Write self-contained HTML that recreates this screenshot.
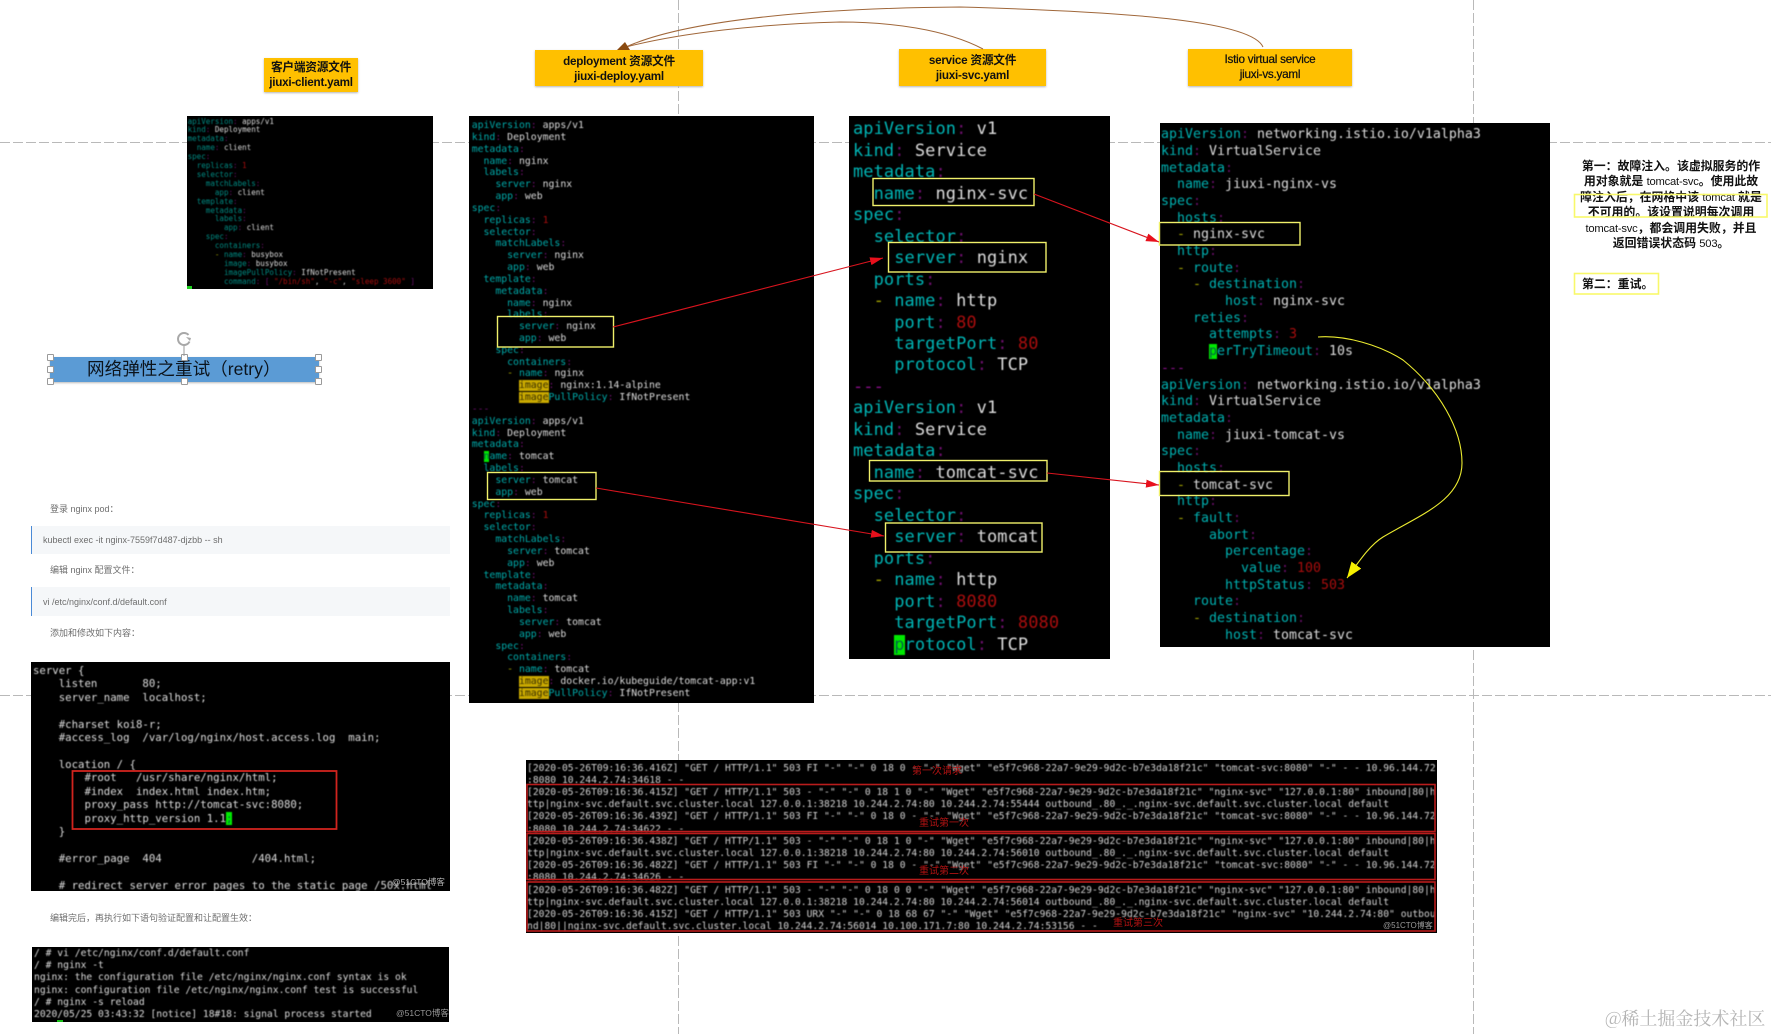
<!DOCTYPE html>
<html lang="zh"><head><meta charset="utf-8"><title>网络弹性之重试</title>
<style>
html,body{margin:0;padding:0;background:#fff;width:1771px;height:1034px;overflow:hidden}
body{position:relative;font-family:"Liberation Sans","Noto Sans CJK SC",sans-serif}
.a{position:absolute}
.blk{position:absolute;background:#000}
pre{position:absolute;margin:0;font-family:"DejaVu Sans Mono",monospace;color:#dcdcdc;white-space:pre;filter:blur(.45px)}
pre i{font-style:normal;color:#00a9a9}
pre b{font-weight:normal;color:#6c0f6c}
pre u{text-decoration:none;color:#a80d0d}
pre s{text-decoration:none;color:#a3a300}
pre em{font-style:normal;background:#c9a900;color:#3a3000}
pre mark{background:#00e800;color:#064}
.lb{position:absolute;background:#ffc000;box-shadow:0 1px 2px #b5b5b5;text-align:center;color:#111;font-size:11.7px;line-height:15px;font-weight:700;letter-spacing:-.25px;filter:blur(.2px)}
.t{position:absolute;font-size:9px;color:#6e6e6e;white-space:nowrap;line-height:12px;filter:blur(.25px)}
.cb{position:absolute;left:31px;width:418px;height:28.5px;background:#f5f7f9;border-left:1.5px solid #4a8ad6}
.h{position:absolute;width:5px;height:5px;background:#fff;border:1px solid #9a9a9a;border-radius:1px}
.rl{position:absolute;color:#b01212;font-size:10px;line-height:12px;white-space:nowrap;filter:blur(.3px)}
.wm{position:absolute;font-size:8.5px;color:#9a9a9a;line-height:10px;white-space:nowrap}
.nt{position:absolute;left:1571px;width:200px;text-align:center;font-family:"Liberation Sans","Noto Sans CJK SC",sans-serif;font-weight:700;font-size:11.9px;line-height:15.6px;color:#111;white-space:nowrap;filter:blur(.2px)}
.nt span{font-weight:400;font-size:11.2px;line-height:0;letter-spacing:-.2px}
</style></head><body>

<svg class="a" style="left:0;top:0" width="1771" height="1034">
<g stroke="#b9b9b9" stroke-width="1" stroke-dasharray="10 3" fill="none">
<path d="M0 142.5H1771M0 695.5H1771M678.5 0V1034M1473.5 0V1034"/>
</g></svg>

<div class="lb" style="left:264px;top:58px;width:94px;height:34px;padding-top:2px;box-sizing:border-box">客户端资源文件<br>jiuxi-client.yaml</div>
<div class="lb" style="left:535px;top:50px;width:168px;height:36px;padding-top:3.5px;box-sizing:border-box">deployment 资源文件<br>jiuxi-deploy.yaml</div>
<div class="lb" style="left:899px;top:49px;width:147px;height:37px;padding-top:4px;box-sizing:border-box">service 资源文件<br>jiuxi-svc.yaml</div>
<div class="lb" style="left:1188px;top:49px;width:164px;height:37px;padding-top:3px;box-sizing:border-box;font-weight:400;-webkit-text-stroke:.25px #111">Istio virtual service<br>jiuxi-vs.yaml</div>

<!-- client -->
<div class="blk" style="left:187px;top:116px;width:246px;height:173px"></div>
<pre style="left:187.6px;top:117.6px;font-size:7.55px;line-height:8.89px"><i style="color:#008a82">apiVersion</i><b>:</b> apps/v1
<i style="color:#008a82">kind</i><b>:</b> Deployment
<i style="color:#008a82">metadata</i><b>:</b>
  <i style="color:#008a82">name</i><b>:</b> client
<i style="color:#008a82">spec</i><b>:</b>
  <i style="color:#008a82">replicas</i><b>:</b> <u>1</u>
  <i style="color:#008a82">selector</i><b>:</b>
    <i style="color:#008a82">matchLabels</i><b>:</b>
      <i style="color:#008a82">app</i><b>:</b> client
  <i style="color:#008a82">template</i><b>:</b>
    <i style="color:#008a82">metadata</i><b>:</b>
      <i style="color:#008a82">labels</i><b>:</b>
        <i style="color:#008a82">app</i><b>:</b> client
    <i style="color:#008a82">spec</i><b>:</b>
      <i style="color:#008a82">containers</i><b>:</b>
      <s>-</s> <i style="color:#008a82">name</i><b>:</b> busybox
        <i style="color:#008a82">image</i><b>:</b> busybox
        <i style="color:#008a82">imagePullPolicy</i><b>:</b> IfNotPresent
        <i style="color:#008a82">command</i><b>:</b> <b>[</b> <u>"/bin/sh"</u>, <u>"-c"</u>, <u>"sleep 3600"</u> <b>]</b></pre>
<div class="a" style="left:187px;top:285.5px;width:5px;height:3.5px;background:#1fd01f"></div>

<!-- blue bar -->
<div class="a" style="left:50px;top:357px;width:269px;height:25px;background:#5b9bd5;box-shadow:0 1px 2px #bbb;line-height:24px;font-size:17.6px;color:#0c141c;white-space:nowrap;text-indent:37px">网络弹性之重试（retry）</div>
<div class="h" style="left:47px;top:354px"></div><div class="h" style="left:181px;top:354px"></div><div class="h" style="left:315px;top:354px"></div>
<div class="h" style="left:47px;top:366px"></div><div class="h" style="left:315px;top:366px"></div>
<div class="h" style="left:47px;top:378px"></div><div class="h" style="left:181px;top:378px"></div><div class="h" style="left:315px;top:378px"></div>
<svg class="a" style="left:170px;top:330px" width="30" height="28"><path d="M14 15V26" stroke="#999" fill="none"/><path d="M19.5 11.5A6 6 0 1 1 18.5 5" stroke="#a8a8a8" stroke-width="2" fill="none"/><path d="M16 7l5 1-1 3z" fill="#a8a8a8"/></svg>

<!-- article -->
<div class="t" style="left:50px;top:503px">登录 nginx pod：</div>
<div class="cb" style="top:525.5px"></div>
<div class="t" style="left:43px;top:534px">kubectl exec -it nginx-7559f7d487-djzbb -- sh</div>
<div class="t" style="left:50px;top:564px">编辑 nginx 配置文件：</div>
<div class="cb" style="top:587px"></div>
<div class="t" style="left:43px;top:596px">vi /etc/nginx/conf.d/default.conf</div>
<div class="t" style="left:50px;top:627px">添加和修改如下内容：</div>

<div class="blk" style="left:30.5px;top:662px;width:419px;height:229px;overflow:hidden"></div>
<div class="a" style="left:30.5px;top:662px;width:419px;height:229px;overflow:hidden">
<pre style="left:2.5px;top:2px;font-size:10.7px;line-height:13.42px">server {
    listen       80;
    server_name  localhost;

    #charset koi8-r;
    #access_log  /var/log/nginx/host.access.log  main;

    location / {
        #root   /usr/share/nginx/html;
        #index  index.html index.htm;
        proxy_pass http://tomcat-svc:8080;
        proxy_http_version 1.1<mark>;</mark>
    }

    #error_page  404              /404.html;

    # redirect server error pages to the static page /50x.html</pre></div>
<div class="wm" style="left:392px;top:877px;color:#b5b5b5">@51CTO博客</div>
<div class="t" style="left:50px;top:912px">编辑完后，再执行如下语句验证配置和让配置生效：</div>

<div class="blk" style="left:31.7px;top:946.7px;width:417.8px;height:75px"></div>
<pre style="left:34px;top:947.9px;font-size:9.68px;line-height:12.2px">/ # vi /etc/nginx/conf.d/default.conf
/ # nginx -t
nginx: the configuration file /etc/nginx/nginx.conf syntax is ok
nginx: configuration file /etc/nginx/nginx.conf test is successful
/ # nginx -s reload
2020/05/25 03:43:32 [notice] 18#18: signal process started</pre>
<div class="a" style="left:57px;top:1020px;width:6px;height:2px;background:#18c018"></div>
<div class="wm" style="left:396px;top:1008px">@51CTO博客</div>

<!-- deploy -->
<div class="blk" style="left:469px;top:116px;width:345px;height:587px"></div>
<pre style="left:471.7px;top:120.1px;font-size:9.82px;line-height:11.83px"><i>apiVersion</i><b>:</b> apps/v1
<i>kind</i><b>:</b> Deployment
<i>metadata</i><b>:</b>
  <i>name</i><b>:</b> nginx
  <i>labels</i><b>:</b>
    <i>server</i><b>:</b> nginx
    <i>app</i><b>:</b> web
<i>spec</i><b>:</b>
  <i>replicas</i><b>:</b> <u>1</u>
  <i>selector</i><b>:</b>
    <i>matchLabels</i><b>:</b>
      <i>server</i><b>:</b> nginx
      <i>app</i><b>:</b> web
  <i>template</i><b>:</b>
    <i>metadata</i><b>:</b>
      <i>name</i><b>:</b> nginx
      <i>labels</i><b>:</b>
        <i>server</i><b>:</b> nginx
        <i>app</i><b>:</b> web
    <i>spec</i><b>:</b>
      <i>containers</i><b>:</b>
      <s>-</s> <i>name</i><b>:</b> nginx
        <em>image</em><b>:</b> nginx:1.14-alpine
        <em>image</em><i>PullPolicy</i><b>:</b> IfNotPresent
<b>---</b>
<i>apiVersion</i><b>:</b> apps/v1
<i>kind</i><b>:</b> Deployment
<i>metadata</i><b>:</b>
  <mark>n</mark><i>ame</i><b>:</b> tomcat
  <i>labels</i><b>:</b>
    <i>server</i><b>:</b> tomcat
    <i>app</i><b>:</b> web
<i>spec</i><b>:</b>
  <i>replicas</i><b>:</b> <u>1</u>
  <i>selector</i><b>:</b>
    <i>matchLabels</i><b>:</b>
      <i>server</i><b>:</b> tomcat
      <i>app</i><b>:</b> web
  <i>template</i><b>:</b>
    <i>metadata</i><b>:</b>
      <i>name</i><b>:</b> tomcat
      <i>labels</i><b>:</b>
        <i>server</i><b>:</b> tomcat
        <i>app</i><b>:</b> web
    <i>spec</i><b>:</b>
      <i>containers</i><b>:</b>
      <s>-</s> <i>name</i><b>:</b> tomcat
        <em>image</em><b>:</b> docker.io/kubeguide/tomcat-app:v1
        <em>image</em><i>PullPolicy</i><b>:</b> IfNotPresent</pre>

<!-- svc -->
<div class="blk" style="left:849px;top:115.5px;width:261px;height:543.5px"></div>
<pre style="left:853px;top:119.3px;font-size:17px;line-height:21.47px;letter-spacing:.07px"><i style="color:#00b4b4">apiVersion</i><b>:</b> v1
<i style="color:#00b4b4">kind</i><b>:</b> Service
<i style="color:#00b4b4">metadata</i><b>:</b>
  <i style="color:#00b4b4">name</i><b>:</b> nginx-svc
<i style="color:#00b4b4">spec</i><b>:</b>
  <i style="color:#00b4b4">selector</i><b>:</b>
    <i style="color:#00b4b4">server</i><b>:</b> nginx
  <i style="color:#00b4b4">ports</i><b>:</b>
  <s>-</s> <i style="color:#00b4b4">name</i><b>:</b> http
    <i style="color:#00b4b4">port</i><b>:</b> <u>80</u>
    <i style="color:#00b4b4">targetPort</i><b>:</b> <u>80</u>
    <i style="color:#00b4b4">protocol</i><b>:</b> TCP
<b style="color:#8a0f8a">---</b>
<i style="color:#00b4b4">apiVersion</i><b>:</b> v1
<i style="color:#00b4b4">kind</i><b>:</b> Service
<i style="color:#00b4b4">metadata</i><b>:</b>
  <i style="color:#00b4b4">name</i><b>:</b> tomcat-svc
<i style="color:#00b4b4">spec</i><b>:</b>
  <i style="color:#00b4b4">selector</i><b>:</b>
    <i style="color:#00b4b4">server</i><b>:</b> tomcat
  <i style="color:#00b4b4">ports</i><b>:</b>
  <s>-</s> <i style="color:#00b4b4">name</i><b>:</b> http
    <i style="color:#00b4b4">port</i><b>:</b> <u>8080</u>
    <i style="color:#00b4b4">targetPort</i><b>:</b> <u>8080</u>
    <mark>p</mark><i style="color:#00b4b4">rotocol</i><b>:</b> TCP</pre>

<!-- vs -->
<div class="blk" style="left:1160px;top:123px;width:390px;height:524px"></div>
<pre style="left:1161px;top:127.2px;font-size:13.25px;line-height:16.68px;letter-spacing:.02px"><i style="color:#00b0b0">apiVersion</i><b>:</b> networking.istio.io/v1alpha3
<i style="color:#00b0b0">kind</i><b>:</b> VirtualService
<i style="color:#00b0b0">metadata</i><b>:</b>
  <i style="color:#00b0b0">name</i><b>:</b> jiuxi-nginx-vs
<i style="color:#00b0b0">spec</i><b>:</b>
  <i style="color:#00b0b0">hosts</i><b>:</b>
  <s>-</s> nginx-svc
  <i style="color:#00b0b0">http</i><b>:</b>
  <s>-</s> <i style="color:#00b0b0">route</i><b>:</b>
    <s>-</s> <i style="color:#00b0b0">destination</i><b>:</b>
        <i style="color:#00b0b0">host</i><b>:</b> nginx-svc
    <i style="color:#00b0b0">reties</i><b>:</b>
      <i style="color:#00b0b0">attempts</i><b>:</b> <u>3</u>
      <mark>p</mark><i style="color:#00b0b0">erTryTimeout</i><b>:</b> 10s
<b style="color:#8a0f8a">---</b>
<i style="color:#00b0b0">apiVersion</i><b>:</b> networking.istio.io/v1alpha3
<i style="color:#00b0b0">kind</i><b>:</b> VirtualService
<i style="color:#00b0b0">metadata</i><b>:</b>
  <i style="color:#00b0b0">name</i><b>:</b> jiuxi-tomcat-vs
<i style="color:#00b0b0">spec</i><b>:</b>
  <i style="color:#00b0b0">hosts</i><b>:</b>
  <s>-</s> tomcat-svc
  <i style="color:#00b0b0">http</i><b>:</b>
  <s>-</s> <i style="color:#00b0b0">fault</i><b>:</b>
      <i style="color:#00b0b0">abort</i><b>:</b>
        <i style="color:#00b0b0">percentage</i><b>:</b>
          <i style="color:#00b0b0">value</i><b>:</b> <u>100</u>
        <i style="color:#00b0b0">httpStatus</i><b>:</b> <u>503</u>
    <i style="color:#00b0b0">route</i><b>:</b>
    <s>-</s> <i style="color:#00b0b0">destination</i><b>:</b>
        <i style="color:#00b0b0">host</i><b>:</b> tomcat-svc</pre>

<!-- log -->
<div class="blk" style="left:526px;top:760px;width:911px;height:173px"></div>
<div class="a" style="left:526px;top:760px;width:911px;height:173px;overflow:hidden">
<pre style="left:1px;top:2.6px;font-size:9.65px;line-height:12.2px;letter-spacing:.03px;color:#d2d2d2">[2020-05-26T09:16:36.416Z] "GET / HTTP/1.1" 503 FI "-" "-" 0 18 0 - "-" "Wget" "e5f7c968-22a7-9e29-9d2c-b7e3da18f21c" "tomcat-svc:8080" "-" - - 10.96.144.72
:8080 10.244.2.74:34618 - -
[2020-05-26T09:16:36.415Z] "GET / HTTP/1.1" 503 - "-" "-" 0 18 1 0 "-" "Wget" "e5f7c968-22a7-9e29-9d2c-b7e3da18f21c" "nginx-svc" "127.0.0.1:80" inbound|80|h
ttp|nginx-svc.default.svc.cluster.local 127.0.0.1:38218 10.244.2.74:80 10.244.2.74:55444 outbound_.80_._.nginx-svc.default.svc.cluster.local default
[2020-05-26T09:16:36.439Z] "GET / HTTP/1.1" 503 FI "-" "-" 0 18 0 - "-" "Wget" "e5f7c968-22a7-9e29-9d2c-b7e3da18f21c" "tomcat-svc:8080" "-" - - 10.96.144.72
:8080 10.244.2.74:34622 - -
[2020-05-26T09:16:36.438Z] "GET / HTTP/1.1" 503 - "-" "-" 0 18 1 0 "-" "Wget" "e5f7c968-22a7-9e29-9d2c-b7e3da18f21c" "nginx-svc" "127.0.0.1:80" inbound|80|h
ttp|nginx-svc.default.svc.cluster.local 127.0.0.1:38218 10.244.2.74:80 10.244.2.74:56010 outbound_.80_._.nginx-svc.default.svc.cluster.local default
[2020-05-26T09:16:36.482Z] "GET / HTTP/1.1" 503 FI "-" "-" 0 18 0 - "-" "Wget" "e5f7c968-22a7-9e29-9d2c-b7e3da18f21c" "tomcat-svc:8080" "-" - - 10.96.144.72
:8080 10.244.2.74:34626 - -
[2020-05-26T09:16:36.482Z] "GET / HTTP/1.1" 503 - "-" "-" 0 18 0 0 "-" "Wget" "e5f7c968-22a7-9e29-9d2c-b7e3da18f21c" "nginx-svc" "127.0.0.1:80" inbound|80|h
ttp|nginx-svc.default.svc.cluster.local 127.0.0.1:38218 10.244.2.74:80 10.244.2.74:56014 outbound_.80_._.nginx-svc.default.svc.cluster.local default
[2020-05-26T09:16:36.415Z] "GET / HTTP/1.1" 503 URX "-" "-" 0 18 68 67 "-" "Wget" "e5f7c968-22a7-9e29-9d2c-b7e3da18f21c" "nginx-svc" "10.244.2.74:80" outbou
nd|80||nginx-svc.default.svc.cluster.local 10.244.2.74:56014 10.100.171.7:80 10.244.2.74:53156 - -</pre></div>
<div class="rl" style="left:912px;top:766px">第一次请求</div>
<div class="rl" style="left:919px;top:818px">重试第一次</div>
<div class="rl" style="left:919px;top:866px">重试第二次</div>
<div class="rl" style="left:1113px;top:918px">重试第三次</div>
<div class="wm" style="left:1383px;top:921px;font-size:8px">@51CTO博客</div>

<!-- notes -->
<div class="nt" style="top:158.5px">第一：故障注入。该虚拟服务的作<br>用对象就是 <span>tomcat-svc</span>。使用此故<br>障注入后，在网格中该 <span>tomcat</span> 就是<br>不可用的。该设置说明每次调用<br><span>tomcat-svc</span>，都会调用失败，并且<br>返回错误状态码 <span>503</span>。</div>
<div class="nt" style="left:1582px;top:276.5px;width:auto">第二：重试。</div>

<div class="a" style="left:1605px;top:1006px;font-family:'Noto Serif CJK SC',serif;font-size:18px;line-height:24px;color:#b4b4b4;white-space:nowrap">@稀土掘金技术社区</div>

<!-- overlay -->
<svg class="a" style="left:0;top:0" width="1771" height="1034">
<defs>
<marker id="r" markerWidth="14" markerHeight="10" refX="13" refY="4" orient="auto" markerUnits="userSpaceOnUse"><path d="M0 0L13 4L0 8z" fill="#e8101c"/></marker>
<marker id="y" markerWidth="18" markerHeight="14" refX="16" refY="6" orient="auto" markerUnits="userSpaceOnUse"><path d="M0 0L16 6L0 12z" fill="#f6f000"/></marker>
</defs>
<!-- brown curves -->
<g fill="none" stroke="#a0673a" stroke-width="1">
<path d="M983 49C945 29 890 22 840 22C760 24 680 33 626 47"/>
<path d="M1263 47C1252 22 1140 12 960 7C830 8 690 18 626 47"/>
</g>
<path d="M617 50L625 42L630 50z" fill="#8a4a10"/>
<!-- yellow boxes -->
<g fill="none" stroke="#f0f06a" stroke-width="1.4">
<rect x="497.5" y="316.5" width="116" height="30.5"/>
<rect x="487.5" y="472.5" width="108.5" height="27"/>
<rect x="873" y="178.5" width="161" height="27"/>
<rect x="888.5" y="242.5" width="157.5" height="29.5"/>
<rect x="869.5" y="460.5" width="177.5" height="20.5"/>
<rect x="885.5" y="523" width="156.5" height="29"/>
<rect x="1159.5" y="222.5" width="140.5" height="22.5"/>
<rect x="1159.5" y="471.5" width="129.5" height="24"/>
</g>
<g fill="none" stroke="#f8f86a" stroke-width="1.6">
<rect x="1574.5" y="194.5" width="192.5" height="22.5"/>
<rect x="1574.5" y="273.5" width="84" height="20.5"/>
</g>
<!-- red arrows -->
<g fill="none" stroke="#d8141e" stroke-width="1.1">
<path d="M613 327L883 258" marker-end="url(#r)"/>
<path d="M596 488L884 536" marker-end="url(#r)"/>
<path d="M1034 194L1159 242" marker-end="url(#r)"/>
<path d="M1047 473L1159 485" marker-end="url(#r)"/>
</g>
<!-- code red boxes -->
<rect x="72.5" y="771" width="264" height="58" fill="none" stroke="#d0241e" stroke-width="1.8"/>
<g fill="none" stroke="#b81c1c" stroke-width="1.6">
<rect x="527" y="784.5" width="908" height="47"/>
<rect x="527" y="833.5" width="908" height="46"/>
<rect x="527" y="882" width="908" height="49"/>
</g>
<!-- yellow curve -->
<path d="M1318 337C1345 335 1380 345 1403 360C1440 390 1462 430 1462 463C1462 500 1420 515 1383 537C1370 545 1360 560 1347 578" fill="none" stroke="#ecec30" stroke-width="1.1" marker-end="url(#y)"/>
</svg>
</body></html>
